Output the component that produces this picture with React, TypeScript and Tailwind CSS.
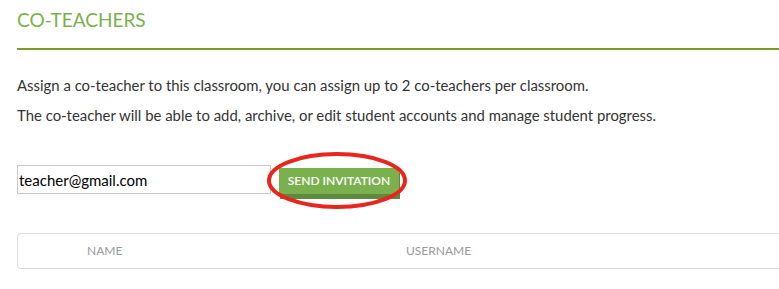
export default function App() {
  return (
    <div className="relative h-[289px] w-[779px] overflow-hidden bg-white font-['Lato',sans-serif]">
      <div className="pl-[17px] pt-[8px]">
        <h2 className="text-[19px] leading-[24px] font-normal text-[#7bb04f]">
          CO-TEACHERS
        </h2>
        <div className="mt-[16px] h-[2px] bg-[#7a9a2a]" />
        <p className="mt-[26px] text-[14.9px] leading-[18px] text-[#333]">
          Assign a co-teacher to this classroom, you can assign up to 2 co-teachers per classroom.
        </p>
        <p className="mt-[12px] text-[14.9px] leading-[18px] text-[#333]">
          The co-teacher will be able to add, archive, or edit student accounts and manage student progress.
        </p>

        <div className="mt-[41px] flex items-start">
          <input
            defaultValue="teacher@gmail.com"
            className="h-[29px] w-[254px] border border-[#c8c8c8] px-[1px] text-[15px] text-black outline-none"
          />
          <div className="relative ml-[8px] mt-[2px]">
            <button className="h-[26px] w-[120px] bg-[#7bb04f] text-[12px] font-semibold text-white shadow-[1px_5px_0_#5e8a3f]">
              SEND INVITATION
            </button>
            <svg
              className="pointer-events-none absolute left-[-14px] top-[-16px]"
              width="146"
              height="62"
              viewBox="0 0 146 62"
            >
              <ellipse cx="72" cy="29.5" rx="68" ry="26.5" fill="none" stroke="#e8261c" strokeWidth="4" />
            </svg>
          </div>
        </div>

        <div className="mt-[39px] flex h-[36px] w-[800px] items-center rounded-[4px] border border-[#dcdcdc] text-[12px] text-[#9a9a9a]">
          <span className="ml-[69px] w-[319px]">NAME</span>
          <span>USERNAME</span>
        </div>
      </div>
    </div>
  );
}
